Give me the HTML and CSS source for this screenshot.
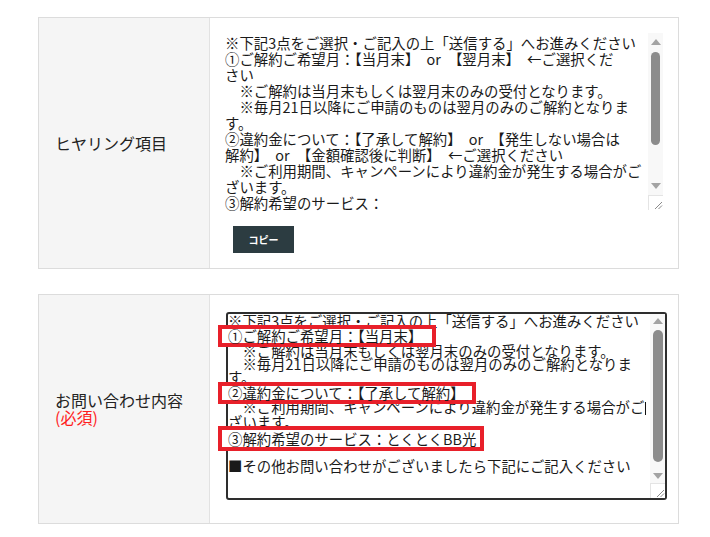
FILE: index.html
```html
<!DOCTYPE html>
<html lang="ja">
<head>
<meta charset="utf-8">
<title>お問い合わせ</title>
<link rel="stylesheet" href="styles.css">
</head>
<body>
<div class="page">
  <div class="row">
    <div class="label"><div>ヒヤリング項目</div></div>
    <div class="field field-hearing">
      <div class="ta ta-plain">
        <div class="ta-body ta-body-plain">
          <div class="ln">※下記3点をご選択・ご記入の上「送信する」へお進みください</div>
          <div class="ln">①ご解約ご希望月：【当月末】　or　【翌月末】　←ご選択くだ</div>
          <div class="ln">さい</div>
          <div class="ln">　※ご解約は当月末もしくは翌月末のみの受付となります。</div>
          <div class="ln">　※毎月21日以降にご申請のものは翌月のみのご解約となりま</div>
          <div class="ln">す。</div>
          <div class="ln">②違約金について：【了承して解約】　or　【発生しない場合は</div>
          <div class="ln">解約】　or　【金額確認後に判断】　←ご選択ください</div>
          <div class="ln">　※ご利用期間、キャンペーンにより違約金が発生する場合がご</div>
          <div class="ln">ざいます。</div>
          <div class="ln">③解約希望のサービス：</div>
        </div>
        <div class="sb sb-plain">
          <div class="sb-btn"><svg width="10" height="6" viewBox="0 0 10 6"><polygon points="0,6 5,0 10,6" fill="#a3a3a3"/></svg></div>
          <div class="sb-track"><div class="sb-thumb"></div></div>
          <div class="sb-btn"><svg width="10" height="6" viewBox="0 0 10 6"><polygon points="0,0 10,0 5,6" fill="#a3a3a3"/></svg></div>
          <div class="sb-corner"><svg width="14" height="14" viewBox="0 0 14 14"><line x1="13" y1="6" x2="6" y2="13" stroke="#8a8a8a" stroke-width="1"/><line x1="13" y1="9.5" x2="9.5" y2="13" stroke="#8a8a8a" stroke-width="1"/></svg></div>
        </div>
      </div>
      <button class="copy-btn" type="button">コピー</button>
    </div>
  </div>

  <div class="row">
    <div class="label">
      <div>お問い合わせ内容</div>
      <div class="req">(必須)</div>
    </div>
    <div class="field field-inquiry">
      <div class="ta ta-framed">
        <div class="ta-body ta-body-framed">
          <div class="ln ln-first">※下記3点をご選択・ご記入の上「送信する」へお進みください</div>
          <div class="hl hl-1">①ご解約ご希望月：【当月末】</div>
          <div class="ln">　※ご解約は当月末もしくは翌月末のみの受付となります。</div>
          <div class="ln">　※毎月21日以降にご申請のものは翌月のみのご解約となりま</div>
          <div class="ln">す。</div>
          <div class="hl hl-2">②違約金について：【了承して解約】</div>
          <div class="ln">　※ご利用期間、キャンペーンにより違約金が発生する場合がご<span class="caret"></span></div>
          <div class="ln">ざいます。</div>
          <div class="hl hl-3">③解約希望のサービス：とくとくBB光</div>
          <div class="ln ln-last">■その他お問い合わせがございましたら下記にご記入ください</div>
        </div>
        <div class="sb sb-framed">
          <div class="sb-btn"><svg width="10" height="6" viewBox="0 0 10 6"><polygon points="0,6 5,0 10,6" fill="#a3a3a3"/></svg></div>
          <div class="sb-track"><div class="sb-thumb"></div></div>
          <div class="sb-btn"><svg width="10" height="6" viewBox="0 0 10 6"><polygon points="0,0 10,0 5,6" fill="#a3a3a3"/></svg></div>
          <div class="sb-corner"><svg width="14" height="14" viewBox="0 0 14 14"><line x1="13" y1="6" x2="6" y2="13" stroke="#8a8a8a" stroke-width="1"/><line x1="13" y1="9.5" x2="9.5" y2="13" stroke="#8a8a8a" stroke-width="1"/></svg></div>
        </div>
      </div>
    </div>
  </div>
</div>
</body>
</html>
```

FILE: styles.css
```css
* { box-sizing: border-box; }

body {
  margin: 0;
  background: #ffffff;
  font-family: "Noto Sans CJK JP", "Noto Sans", sans-serif;
  color: #222222;
}

.page {
  padding: 17px 0 0 38px;
  display: flex;
  flex-direction: column;
  gap: 25px;
}

.row {
  display: grid;
  grid-template-columns: 171px 1fr;
  width: 641px;
  border: 1px solid #dcdcdc;
}

.label {
  background: #f5f5f5;
  border-right: 1px solid #e2e2e2;
  display: flex;
  flex-direction: column;
  justify-content: center;
  padding-left: 16px;
  font-size: 16px;
  line-height: 17px;
  color: #222222;
}

.req { color: #ff1e1e; }

.field-hearing {
  padding: 15px 15px 15px 12px;
  display: flex;
  flex-direction: column;
  align-items: flex-start;
}

.field-inquiry {
  padding: 17px 11px 23px 16px;
}

.ta {
  display: flex;
  background: #ffffff;
  font-size: 14.4px;
  color: #1a1a1a;
}

.ta-plain {
  width: 441px;
  height: 177px;
}

.ta-framed {
  width: 441px;
  height: 188px;
  border: 2px solid #2e2e2e;
  border-radius: 3px;
}

.ta-body {
  flex: 1;
  min-width: 0;
}

.ln, .hl { white-space: pre; }

.ta-body-plain {
  padding: 2px 0 0 3px;
  line-height: 16px;
}

.ta-body-framed {
  padding: 0;
  line-height: 13px;
}

.ln-first { line-height: 13px; }
.ln-last { line-height: 14px; }

.hl {
  position: relative;
  z-index: 1;
  background: #ffffff;
  border: 4px solid #e8202a;
  margin-left: -10px;
  padding-left: 6px;
}

.hl-1 { width: 218px; height: 22px; line-height: 14px; margin-top: -2px; margin-bottom: -3px; }
.hl-2 { width: 258px; height: 22px; line-height: 14px; margin-top: -1px; margin-bottom: -4px; }
.hl-3 { width: 266px; height: 25px; line-height: 17px; margin-top: -2px; margin-bottom: 8px; }

.caret {
  display: inline-block;
  width: 1px;
  height: 13px;
  background: #111111;
  vertical-align: -2px;
  margin-left: 1px;
}

.sb {
  width: 15px;
  flex: none;
  display: flex;
  flex-direction: column;
  background: #f8f8f8;
}

.sb-btn {
  display: flex;
  align-items: center;
  justify-content: center;
  flex: none;
}

.sb-plain .sb-btn { height: 18px; }
.sb-framed .sb-btn { height: 14px; }

.sb-track {
  flex: 1;
  display: flex;
  flex-direction: column;
  align-items: center;
}

.sb-thumb {
  background: #8c8c8c;
  border-radius: 5px;
}

.sb-plain .sb-thumb { width: 9px; height: 93px; margin-top: 1px; }
.sb-framed .sb-thumb { width: 10px; height: 132px; margin-top: 2px; }

.sb-corner {
  height: 15px;
  flex: none;
  background: #ffffff;
  border-left: 1px solid #e4e4e4;
  border-top: 1px solid #e4e4e4;
  display: flex;
  align-items: flex-end;
  justify-content: flex-end;
}

.sb-corner svg { display: block; }

.copy-btn {
  margin: 16px 0 0 11px;
  width: 61px;
  height: 27px;
  padding: 0;
  border: none;
  background: #2c3c41;
  color: #ffffff;
  font-family: "Noto Sans CJK JP", "Noto Sans", sans-serif;
  font-size: 10px;
  font-weight: 700;
  line-height: 27px;
  text-align: center;
}
```
